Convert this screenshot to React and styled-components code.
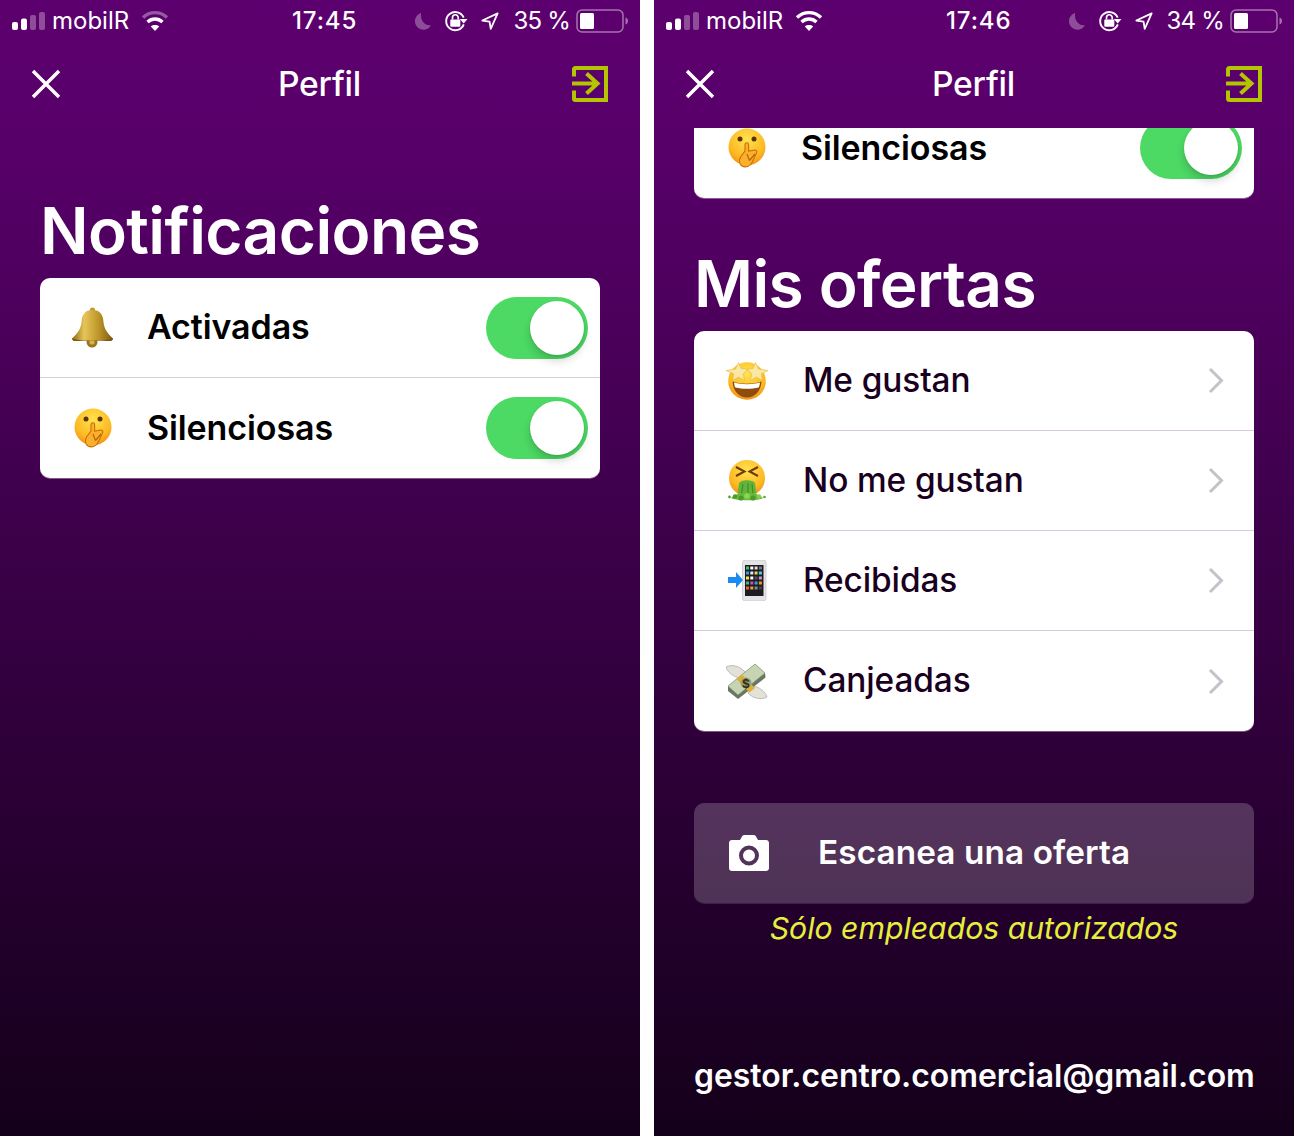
import React from "react";
import styled, { createGlobalStyle } from "styled-components";

const GlobalStyle = createGlobalStyle`
  html, body { margin: 0; padding: 0; background: #fff; }
  body { font-family: Inter, "Liberation Sans", sans-serif; }
  svg { display: block; flex: none; }
`;

const Page = styled.div`
  display: flex;
  gap: 14px;
  width: 1294px;
  height: 1136px;
  overflow: hidden;
`;

const Phone = styled.div`
  width: 640px;
  height: 1136px;
  display: flex;
  flex-direction: column;
  flex: none;
  background: linear-gradient(180deg, #5d006f 0%, #58006a 12%, #3a0047 50%, #14001a 100%);
  color: #fff;
`;

const StatusBar = styled.div`
  display: grid;
  grid-template-columns: 280px auto 1fr;
  align-items: center;
  height: 42px;
  padding: 0 12px;
  flex: none;
`;

const CarrierGroup = styled.div`
  display: flex;
  align-items: center;
  gap: 7px;
`;

const Carrier = styled.span`
  font-size: 24px;
  line-height: 28px;
  margin-right: 5px;
`;

const Clock = styled.span`
  font-size: 24px;
  font-weight: 500;
  line-height: 28px;
  letter-spacing: 0.9px;
`;

const IndicatorGroup = styled.div`
  display: flex;
  align-items: center;
  justify-content: flex-end;
  gap: 13px;
`;

const BatteryText = styled.span`
  font-size: 24px;
  line-height: 28px;
  letter-spacing: -0.8px;
  white-space: nowrap;
  margin: 0 -7px 0 1px;
`;

const NavBar = styled.div`
  display: grid;
  grid-template-columns: 1fr auto 1fr;
  align-items: center;
  height: 86px;
  box-sizing: border-box;
  padding: 0 32px 3px 31px;
  flex: none;
`;

const NavTitle = styled.div`
  font-size: 33.6px;
  font-weight: 500;
  letter-spacing: -0.2px;
`;

const NavEnd = styled.div`
  justify-self: end;
`;

const Scroll = styled.div`
  flex: 1;
  min-height: 0;
  overflow: hidden;
  padding: 0 40px;
`;

const SectionTitle = styled.h1`
  margin: ${(p) => p.$top}px 0 0;
  font-size: 64px;
  line-height: 78px;
  font-weight: 600;
  letter-spacing: -0.6px;
  padding-bottom: 8px;
`;

const Card = styled.div`
  background: #fff;
  border-radius: 10px;
  overflow: hidden;
  box-shadow: 0 1px 0 rgba(255, 255, 255, 0.35);
  margin-top: ${(p) => p.$top || 0}px;
`;

const Row = styled.div`
  display: flex;
  align-items: center;
  height: 100px;
  box-sizing: border-box;
  border-bottom: ${(p) => (p.$divider ? `1px solid ${p.$divider}` : "none")};
  padding: 0 12px 0 32px;
`;

const IconSlot = styled.div`
  width: 42px;
  flex: none;
  display: flex;
  justify-content: center;
  margin-right: ${(p) => p.$gap}px;
`;

const RowLabel = styled.div`
  flex: 1;
  font-size: ${(p) => p.$size}px;
  font-weight: ${(p) => p.$weight};
  color: ${(p) => p.$color};
  letter-spacing: -0.1px;
  padding-bottom: 2px;
`;

const Toggle = styled.div`
  position: relative;
  width: 102px;
  height: 62px;
  border-radius: 31px;
  background: #4cd964;
  flex: none;
`;

const Knob = styled.div`
  position: absolute;
  top: 4px;
  right: 4px;
  width: 54px;
  height: 54px;
  border-radius: 50%;
  background: #fff;
  box-shadow: 0 6px 8px rgba(0, 0, 0, 0.16), 0 1px 2px rgba(0, 0, 0, 0.1);
`;

const ChevronSlot = styled.div`
  margin-right: 18px;
`;

const ScanButton = styled.div`
  display: flex;
  align-items: center;
  height: 100px;
  margin-top: 72px;
  padding-left: 35px;
  box-sizing: border-box;
  border-radius: 10px;
  background: rgba(255, 255, 255, 0.2);
  box-shadow: 0 1px 0 rgba(255, 255, 255, 0.12);
`;

const ScanLabel = styled.div`
  margin-left: 49px;
  font-size: 33.3px;
  font-weight: 600;
  letter-spacing: 0.1px;
  padding-bottom: 2px;
`;

const Note = styled.div`
  margin-top: 5px;
  text-align: center;
  font-size: 30.2px;
  line-height: 40px;
  font-style: italic;
  color: #e4f03c;
`;

const Email = styled.div`
  margin-top: 108px;
  font-size: 31.9px;
  line-height: 40px;
  font-weight: 600;
  white-space: nowrap;
`;

const Signal = () => (
  <svg width="33" height="18" viewBox="0 0 33 18">
    <rect x="0" y="10" width="6" height="8" rx="2" fill="#fff" />
    <rect x="9" y="6.5" width="6" height="11.5" rx="2" fill="#fff" />
    <rect x="18" y="3" width="6" height="15" rx="2" fill="#fff" opacity="0.3" />
    <rect x="27" y="0" width="6" height="18" rx="2" fill="#fff" opacity="0.3" />
  </svg>
);

const Wifi = ({ dim }) => (
  <svg width="28" height="22" viewBox="0 0 28 22" fill="none" stroke="#fff" strokeWidth="3.4">
    <path d="M2 7.5C9 1 19 1 26 7.5" opacity={dim ? 0.35 : 1} />
    <path d="M6.5 12C11 8 17 8 21.5 12" />
    <path d="M14 21l-4.2-4.6c2.4-1.8 6-1.8 8.4 0z" fill="#fff" stroke="none" />
  </svg>
);

const Moon = () => (
  <svg width="18" height="20" viewBox="0 0 20 20">
    <path d="M8 1a9.5 9.5 0 1 0 11 13.5C12 16 6.5 9 8 1z" fill="#fff" opacity="0.3" />
  </svg>
);

const RotationLock = () => (
  <svg width="23" height="22" viewBox="0 0 24 23" fill="none">
    <path d="M19.5 8A9.5 9.5 0 1 0 19.6 15" stroke="#fff" strokeWidth="2" />
    <path d="M15.5 9.5h8l-4 4.500z" fill="#fff" />
    <rect x="5.5" y="10" width="10.5" height="7.5" rx="1" fill="#fff" />
    <path d="M7.8 10V8a3 3 0 0 1 6 0v2" stroke="#fff" strokeWidth="1.7" />
  </svg>
);

const LocationArrow = () => (
  <svg width="18" height="18" viewBox="0 0 20 20" fill="none">
    <path d="M18.5 1.5L1.5 9.500l8 1.200 1.300 8z" stroke="#fff" strokeWidth="2" strokeLinejoin="round" />
  </svg>
);

const Battery = ({ level }) => (
  <svg width="52" height="24" viewBox="0 0 52 24">
    <rect x="1" y="1" width="46" height="22" rx="5" fill="none" stroke="#fff" strokeOpacity="0.45" strokeWidth="1.5" />
    <rect x="4" y="4" width={level} height="16" rx="1.5" fill="#fff" />
    <path d="M49.5 8.5c1.6.4 2.5 2 2.5 3.5s-.9 3.1-2.5 3.5z" fill="#fff" opacity="0.45" />
  </svg>
);

const CloseIcon = () => (
  <svg width="30" height="30" viewBox="0 0 30 30">
    <path d="M2 2l26 26M28 2L2 28" stroke="#fff" strokeWidth="3.4" />
  </svg>
);

const ExitIcon = () => (
  <svg width="36" height="36" viewBox="0 0 36 36" fill="none" stroke="#b5c400" strokeWidth="4">
    <path d="M2 10.500V3.500A1.500 1.500 0 0 1 3.500 2H34v32H3.500A1.500 1.500 0 0 1 2 32.500V24.500" />
    <path d="M0 17.500h26M14.500 7.500l11 10-11 10" />
  </svg>
);

const Chevron = () => (
  <svg width="16" height="27" viewBox="0 0 16 27" fill="none">
    <path d="M2 2l11.500 11.500L2 25" stroke="#c4c2c8" strokeWidth="3" />
  </svg>
);

const CameraIcon = () => (
  <svg width="40" height="36" viewBox="0 0 40 36">
    <path
      fillRule="evenodd"
      fill="#fff"
      d="M3 5h8l2-3.500C13.600.5 14.500 0 15.500 0h9c1 0 1.900.5 2.500 1.500L29 5h8c1.700 0 3 1.300 3 3v25c0 1.700-1.300 3-3 3H3c-1.700 0-3-1.300-3-3V8c0-1.700 1.300-3 3-3zm17 5.500a10 10 0 1 0 0 20 10 10 0 0 0 0-20zm0 4a6 6 0 1 1 0 12 6 6 0 0 1 0-12z"
    />
  </svg>
);

const BellEmoji = () => (
  <svg width="42" height="41" viewBox="0 0 42 41">
    <defs>
      <linearGradient id="bell" x1="0" x2="1" y1="0" y2="0">
        <stop offset="0" stopColor="#8f6a14" />
        <stop offset="0.3" stopColor="#e6c558" />
        <stop offset="0.65" stopColor="#bd9528" />
        <stop offset="1" stopColor="#7c5a10" />
      </linearGradient>
    </defs>
    <circle cx="20.500" cy="3" r="2.600" fill="#c39a2e" />
    <circle cx="20" cy="35" r="5.500" fill="#9a7420" />
    <circle cx="20" cy="35" r="2.600" fill="#d9b24a" />
    <path d="M20.500 3c7.500 0 10.500 4.500 11 12 .4 6 3.500 11 9.500 16.500 0 1.200-.8 1.600-2 2H2c-1.200-.4-2-.8-2-2C6 26 9.100 21 9.500 15c.5-7.500 3.500-12 11-12z" fill="url(#bell)" />
    <path d="M0 31.500C8 34.500 33 34.500 41 31.500 40.500 33.500 39.500 34 38 34H3C1.500 34 .5 33.500 0 31.500z" fill="#7a5810" />
  </svg>
);

const faceGradient = (id) => (
  <radialGradient id={id} cx="0.5" cy="0.3" r="0.8">
    <stop offset="0" stopColor="#ffe34f" />
    <stop offset="0.62" stopColor="#fdb922" />
    <stop offset="1" stopColor="#ec7f0e" />
  </radialGradient>
);

const ShushEmoji = ({ id }) => (
  <svg width="38" height="40" viewBox="0 0 38 40">
    <defs>{faceGradient(id)}</defs>
    <circle cx="19" cy="19" r="18.500" fill={`url(#${id})`} />
    <circle cx="12" cy="11" r="2.500" fill="#5c3208" />
    <circle cx="26" cy="11" r="2.500" fill="#5c3208" />
    <path d="M17 16.500c0-2.400 3.600-2.400 3.600 0v6.500l6.500-1c2 0 2 2 1.200 3.500l-4.300 9c-1.800 4-6.500 5.500-10 3.500-3-2-3-6-1.500-9l4.500-6z" fill="#fbb02c" stroke="#c96f08" strokeWidth="1.100" />
    <path d="M19 26l2.500 6.500M27 26l-5.500 6.500" stroke="#b9630a" strokeWidth="1.200" fill="none" />
  </svg>
);

const StarsEmoji = ({ id }) => (
  <svg width="42" height="39" viewBox="0 0 42 39">
    <defs>{faceGradient(id)}</defs>
    <circle cx="21" cy="20" r="18.800" fill={`url(#${id})`} />
    <path d="M6.500 20.500c9 3 20 3 29 0-.5 10-7 16-14.500 16S7 30.500 6.500 20.500z" fill="#8f4c0c" />
    <path d="M8 21.500c8 2.200 18 2.200 26 0-.2 2.200-.6 3.600-1.300 5-7 1.800-16.400 1.800-23.400 0-.7-1.400-1.100-2.800-1.300-5z" fill="#fff" />
    <path d="M12.500 1.500l2.800 6 6.700.8-4.700 4.500 1.200 6.700-6-3.400-5.800 3.400.9-6.700L0 9.500l9.500-1.600z" fill="#f8e8a4" stroke="#e9b635" strokeWidth="0.600" />
    <path d="M29.500 1.500l3 6.400 9.500 1.600-6.600 3.300.9 6.700-5.800-3.400-6 3.400 1.200-6.700L21 8.300l6-.8z" fill="#f8e8a4" stroke="#e9b635" strokeWidth="0.600" />
  </svg>
);

const VomitEmoji = ({ id }) => (
  <svg width="38" height="41" viewBox="0 0 38 41">
    <defs>{faceGradient(id)}</defs>
    <circle cx="19" cy="18" r="18" fill={`url(#${id})`} />
    <path d="M8 7l8.500 4.500L8 16M30 7l-8.500 4.500L30 16" fill="none" stroke="#6e3a0c" strokeWidth="2" />
    <path d="M11 23.500c1-4.500 15-4.500 16 0l1.500 10h-19z" fill="#62b53a" />
    <path d="M15 24l-1.500 10M20 23v11M24 24l1 10" stroke="#3f8f2a" strokeWidth="1.200" />
    <path d="M3 38c4-4 9-5 16-5s12 1 16 5c-3 3-28 3-32 0z" fill="#6bb93a" />
    <circle cx="1.500" cy="37" r="1.400" fill="#58a530" />
    <circle cx="7" cy="36.500" r="2.200" fill="#4d9a2c" />
    <circle cx="13" cy="38" r="2.600" fill="#4d9a2c" />
    <circle cx="19" cy="36" r="2.800" fill="#8ad64e" />
    <circle cx="25" cy="38" r="2.600" fill="#4d9a2c" />
    <circle cx="31" cy="36.500" r="2.200" fill="#87cf4a" />
    <circle cx="36.500" cy="37" r="1.300" fill="#58a530" />
  </svg>
);

const appColors = ["#38c172", "#fff", "#ddd", "#777", "#2aa3e8", "#e9e9e9", "#e9d84a", "#48d4e6", "#f6e04a", "#fff", "#555", "#d68be0", "#38c172", "#d648b8", "#2aa3e8", "#f09a20", "#e8603c", "#f0a030", "#888", "#444"];

const PhoneEmoji = () => (
  <svg width="39" height="41" viewBox="0 0 39 41">
    <rect x="14.500" y="0" width="23.500" height="41" rx="3" fill="#e4e4e6" stroke="#c8c8cc" strokeWidth="0.800" />
    <rect x="17" y="5" width="18.500" height="31" fill="#1c1c22" />
    {appColors.map((c, i) => (
      <rect key={i} x={18 + (i % 4) * 4.3} y={6.5 + Math.floor(i / 4) * 5} width="3" height="3" fill={c} />
    ))}
    <path d="M0 17h8v-5l7 8-7 8v-5H0z" fill="#1a8cf0" />
  </svg>
);

const MoneyEmoji = () => (
  <svg width="42" height="37" viewBox="0 0 42 37">
    <path d="M0 4c6-3 14-1 19 5l-5 6C8 14 2 10 0 4zM41 34c-5 3-14 2-19-4l5-7c6 1 12 5 14 11z" fill="#e2e2d8" stroke="#a9a99e" strokeWidth="0.700" />
    <path d="M2 23L29 1l10 9 .5 4.500L12 36 2 28z" fill="#6b7562" />
    <path d="M2 23L29 1l10 9-27 22z" fill="#c7d4b4" stroke="#87977a" strokeWidth="0.600" />
    <path d="M10.500 16l5.500-4.500 13 13.500-5.500 4.500z" fill="#e0ae35" />
    <circle cx="20" cy="20" r="5.500" fill="#93a37c" />
    <text x="20" y="24.500" textAnchor="middle" fontSize="12" fontWeight="700" fontFamily="Inter, sans-serif" fill="#3c2e10">$</text>
  </svg>
);

const Status = ({ time, battery, wifiDim }) => (
  <StatusBar>
    <CarrierGroup>
      <Signal />
      <Carrier>mobilR</Carrier>
      <Wifi dim={wifiDim} />
    </CarrierGroup>
    <Clock>{time}</Clock>
    <IndicatorGroup>
      <Moon />
      <RotationLock />
      <LocationArrow />
      <BatteryText>{battery} %</BatteryText>
      <Battery level={14} />
    </IndicatorGroup>
  </StatusBar>
);

const Nav = () => (
  <NavBar>
    <CloseIcon />
    <NavTitle>Perfil</NavTitle>
    <NavEnd>
      <ExitIcon />
    </NavEnd>
  </NavBar>
);

const SwitchRow = ({ icon, label, divider }) => (
  <Row $divider={divider && "#d2d0d4"}>
    <IconSlot $gap={33}>{icon}</IconSlot>
    <RowLabel $size={34} $weight={600} $color="#000">{label}</RowLabel>
    <Toggle>
      <Knob />
    </Toggle>
  </Row>
);

const offers = [
  { label: "Me gustan", icon: <StarsEmoji id="f1" /> },
  { label: "No me gustan", icon: <VomitEmoji id="f2" /> },
  { label: "Recibidas", icon: <PhoneEmoji /> },
  { label: "Canjeadas", icon: <MoneyEmoji /> },
];

export default function App() {
  return (
    <Page>
      <GlobalStyle />
      <Phone>
        <Status time="17:45" battery="35" wifiDim />
        <Nav />
        <Scroll>
          <SectionTitle $top={64}>Notificaciones</SectionTitle>
          <Card>
            <SwitchRow icon={<BellEmoji />} label="Activadas" divider />
            <SwitchRow icon={<ShushEmoji id="f3" />} label="Silenciosas" />
          </Card>
        </Scroll>
      </Phone>
      <Phone>
        <Status time="17:46" battery="34" />
        <Nav />
        <Scroll>
          <Card $top={-30}>
            <SwitchRow icon={<ShushEmoji id="f4" />} label="Silenciosas" />
          </Card>
          <SectionTitle $top={47}>Mis ofertas</SectionTitle>
          <Card>
            {offers.map((o, i) => (
              <Row key={o.label} $divider={i < offers.length - 1 && "#d8cadc"}>
                <IconSlot $gap={35}>{o.icon}</IconSlot>
                <RowLabel $size={33.4} $weight={500} $color="#1a0020">{o.label}</RowLabel>
                <ChevronSlot>
                  <Chevron />
                </ChevronSlot>
              </Row>
            ))}
          </Card>
          <ScanButton>
            <CameraIcon />
            <ScanLabel>Escanea una oferta</ScanLabel>
          </ScanButton>
          <Note>Sólo empleados autorizados</Note>
          <Email>gestor.centro.comercial@gmail.com</Email>
        </Scroll>
      </Phone>
    </Page>
  );
}
